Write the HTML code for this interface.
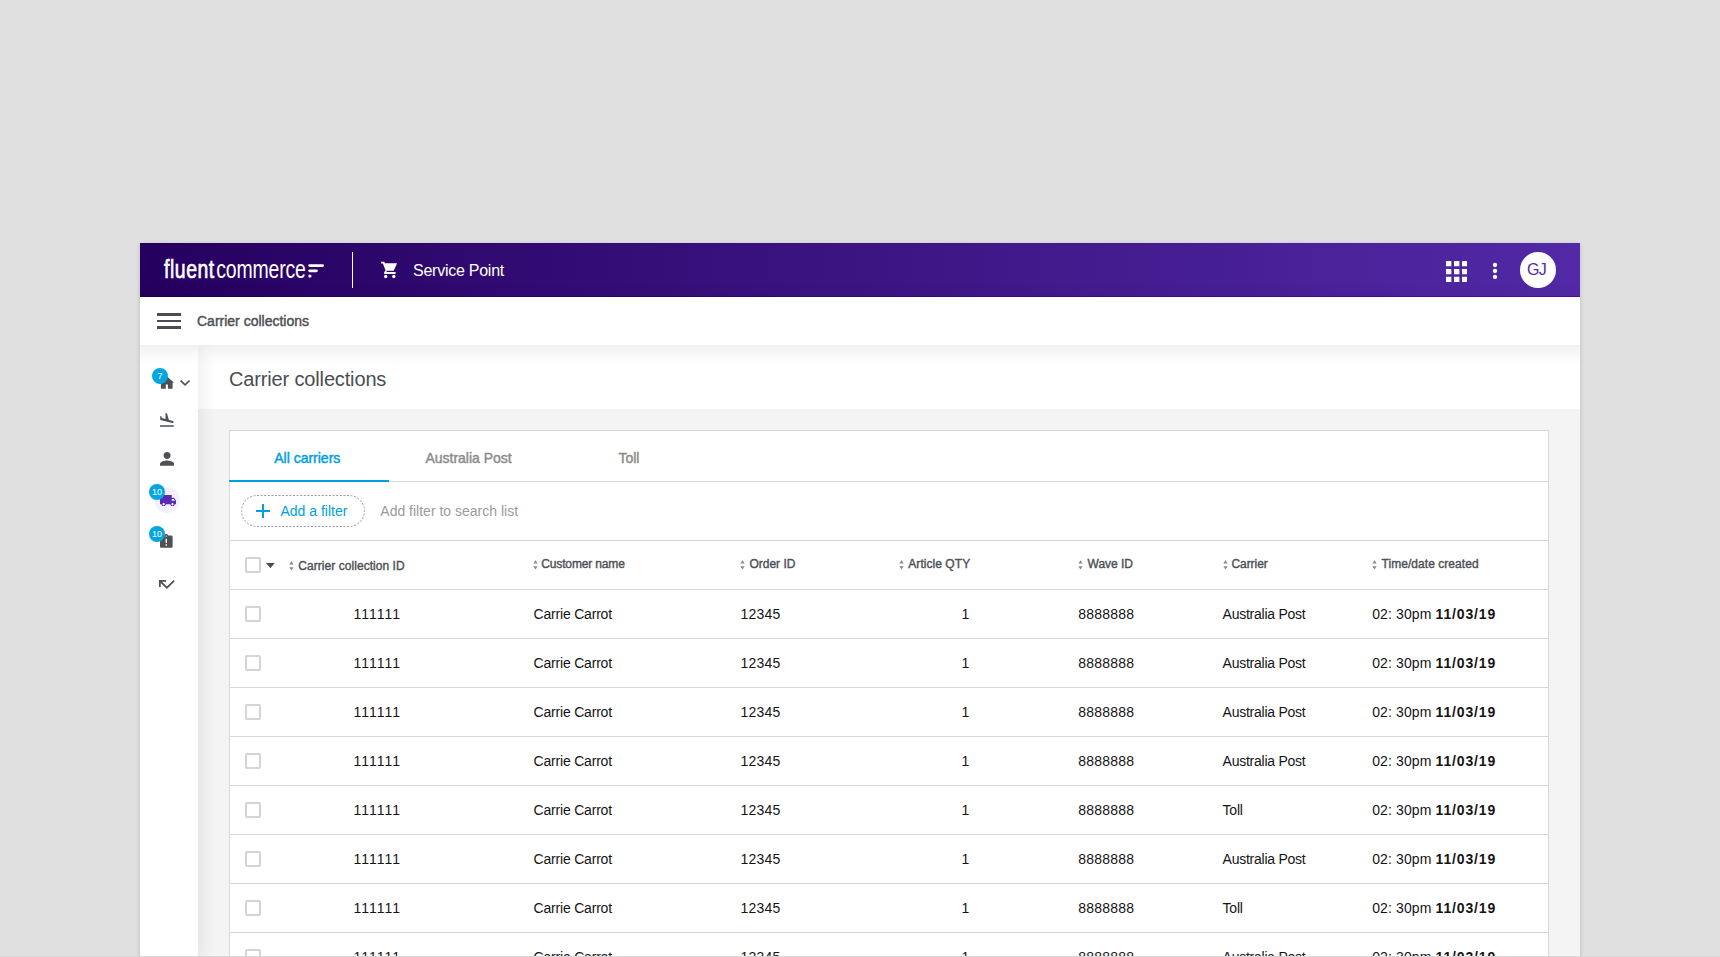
<!DOCTYPE html><html><head><meta charset="utf-8"><style>
*{box-sizing:border-box;margin:0;padding:0}
html,body{width:1720px;height:957px;overflow:hidden;background:#e0e0e0;font-family:"Liberation Sans",sans-serif}
.a{position:absolute}
.t{position:absolute;white-space:nowrap;line-height:16px}
#frame{position:absolute;left:140px;top:243px;width:1440px;height:714px;background:#f4f4f4;box-shadow:0 1px 4px rgba(0,0,0,.18);overflow:hidden}
#hdr{position:absolute;left:0;top:0;width:1440px;height:54px;background:linear-gradient(90deg,#25005f 0%,#5229a6 100%)}
#sub{position:absolute;left:0;top:54px;width:1440px;height:48px;background:#fff;z-index:4}
#subsh{position:absolute;left:-40px;top:54px;width:1520px;height:48px;background:#fff;box-shadow:0 4px 20px rgba(0,0,0,.085);z-index:3}
#side{position:absolute;left:0;top:102px;width:58px;height:620px;background:#fff;box-shadow:3px 0 18px rgba(0,0,0,.08);z-index:2}
#title{position:absolute;left:58px;top:102px;width:1382px;height:64px;background:#fff}
#card{position:absolute;left:89px;top:187px;width:1320px;height:600px;background:#fff;border:1px solid #d6d8db}
.hl{position:absolute;left:0;width:1318px;height:1px;background:#d6d8db}
.cb{position:absolute;width:16px;height:16px;border:2px solid #d4d4d4;border-radius:2px;background:#fff}
.th{position:absolute;white-space:nowrap;font-weight:normal;font-size:12px;line-height:14px;color:#4e5156;-webkit-text-stroke:0.4px #4e5156;letter-spacing:0}
.td{position:absolute;white-space:nowrap;font-size:14px;line-height:16px;color:#151515}
.badge{position:absolute;width:16px;height:16px;border-radius:50%;background:#04a5e0;color:#fff;font-size:9px;line-height:16px;text-align:center;z-index:2}
</style></head><body><div id="frame">
<div id="hdr"><div class="a" style="left:0;top:53px;width:1440px;height:1px;background:linear-gradient(90deg,#1c0050,#4412a0)"></div>
<div class="t" style="left:24px;top:11px;height:30px;line-height:30px;color:#fff;font-size:26.5px;transform:scaleX(.733);transform-origin:0 0;letter-spacing:0px"><b style="font-weight:normal;-webkit-text-stroke:0.7px #fff;letter-spacing:0.75px;margin-right:2px">fluent</b><span style="letter-spacing:-0.2px">commerce</span></div>
<svg class="a" style="left:168.3px;top:20px" width="18" height="15" viewBox="0 0 18 15"><rect x="0.3" y="1.2" width="15.7" height="2.7" rx="1.35" fill="#fff"/><rect x="0.3" y="6.4" width="9.5" height="2.8" rx="1.4" fill="#fff"/><circle cx="1.9" cy="13.05" r="1.6" fill="#fff"/></svg>
<div class="a" style="left:212px;top:9px;width:1px;height:36px;background:#fff"></div>
<svg class="a" style="left:236px;top:14px" width="30" height="30" viewBox="376 257 30 30"><g fill="#fff"><path d="M381.1 261.8H384.3L384.9 263.3H397.1L393.7 270.7H386.5L386.6 271.9H395.6V273.9H384.2V272.3L385.5 270.3L382.9 263.6H381.1V261.8Z"/><circle cx="385.7" cy="276.5" r="1.65"/><circle cx="393.8" cy="276.5" r="1.65"/></g></svg>
<div class="t" style="left:273px;top:19px;color:#fff;font-size:16px;line-height:18px;letter-spacing:-0.25px">Service Point</div>
<svg class="a" style="left:1306px;top:18px" width="21.4" height="21" viewBox="4 4 16 16" preserveAspectRatio="none"><path fill="#fff" d="M4 8h4V4H4v4zm6 12h4v-4h-4v4zm-6 0h4v-4H4v4zm0-6h4v-4H4v4zm6 0h4v-4h-4v4zm6-10v4h4V4h-4zm-6 4h4V4h-4v4zm6 6h4v-4h-4v4zm0 6h4v-4h-4v4z"/></svg>
<svg class="a" style="left:1352px;top:19px" width="6" height="18" viewBox="0 0 6 18"><circle cx="3" cy="3" r="2.15" fill="#fff"/><circle cx="3" cy="9" r="2.15" fill="#fff"/><circle cx="3" cy="14.9" r="2.15" fill="#fff"/></svg>
<div class="a" style="left:1380px;top:9px;width:36px;height:36px;border-radius:50%;background:#fff"></div>
<div class="t" style="left:1378.5px;top:18px;width:36px;text-align:center;color:#5229a6;font-size:16px;line-height:18px;letter-spacing:-0.7px">GJ</div>
</div>
<div id="subsh"></div><div id="sub">
<div class="a" style="left:17px;top:16px;width:24px;height:2.6px;background:#4a4d52"></div>
<div class="a" style="left:17px;top:22.5px;width:24px;height:2.6px;background:#4a4d52"></div>
<div class="a" style="left:17px;top:29px;width:24px;height:2.6px;background:#4a4d52"></div>
<div class="t" style="left:57px;top:16px;font-weight:normal;font-size:14px;color:#4e5156;-webkit-text-stroke:0.45px #4e5156;letter-spacing:0">Carrier collections</div>
</div>
<div id="side">
<svg class="a" style="left:0;top:0" width="58" height="60" viewBox="140 345 58 60"><path fill="#4d5055" d="M159.4 382.8L166.75 376.2L174.1 382.8L172.6 382.8L172.6 388.8L167.9 388.8L167.9 384.4L165.8 384.4L165.8 388.8L160.9 388.8L160.9 382.8Z"/></svg>
<svg class="a" style="left:39.599999999999994px;top:34.60000000000002px" width="10.2" height="6" viewBox="6 8.59 12 7.41" preserveAspectRatio="none"><path fill="#4e5156" d="M7.41 8.59L12 13.17l4.59-4.58L18 10l-6 6-6-6 1.41-1.41z" /></svg>
<svg class="a" style="left:20px;top:68px" width="13.8" height="13.8" viewBox="2.5 2 19 19" preserveAspectRatio="none"><path fill="#4e5156" d="M2.5 19h19v2h-19zm7.18-5.73l4.35 1.16 5.31 1.42c.8.21 1.62-.26 1.84-1.06.21-.8-.26-1.62-1.06-1.84l-5.31-1.42-2.76-9.02L10.12 2v8.28L5.15 8.95l-.93-2.32-1.45-.39v5.17l1.6.43 5.31 1.43z" /></svg>
<svg class="a" style="left:19.900000000000006px;top:107.10000000000002px" width="14.2" height="13.8" viewBox="4 4 16 16" preserveAspectRatio="none"><path fill="#4e5156" d="M12 12c2.21 0 4-1.79 4-4s-1.79-4-4-4-4 1.79-4 4 1.79 4 4 4zm0 2c-2.67 0-8 1.34-8 4v2h16v-2c0-2.66-5.33-4-8-4z" /></svg>
<div class="a" style="left:13.699999999999989px;top:141.7px;width:26px;height:26px;border-radius:50%;background:#f6effd"></div>
<svg class="a" style="left:19.900000000000006px;top:149.7px" width="16.2" height="11.3" viewBox="1 4 22 16" preserveAspectRatio="none"><path fill="#5a2bb0" d="M20 8h-3V4H3c-1.1 0-2 .9-2 2v11h2c0 1.66 1.34 3 3 3s3-1.34 3-3h6c0 1.66 1.34 3 3 3s3-1.34 3-3h2v-5l-3-4zM6 18.5c-.83 0-1.5-.67-1.5-1.5s.67-1.5 1.5-1.5 1.5.67 1.5 1.5-.67 1.5-1.5 1.5zm13.5-9l1.96 2.5H17V9.5h2.5zm-1.5 9c-.83 0-1.5-.67-1.5-1.5s.67-1.5 1.5-1.5 1.5.67 1.5 1.5-.67 1.5-1.5 1.5z" /></svg>
<svg class="a" style="left:20.19999999999999px;top:189px" width="12.6" height="13.8" viewBox="3 1 18 20" preserveAspectRatio="none"><path fill="#4e5156" d="M19 3h-4.18C14.4 1.84 13.3 1 12 1c-1.3 0-2.4.84-2.82 2H5c-1.1 0-2 .9-2 2v14c0 1.1.9 2 2 2h14c1.1 0 2-.9 2-2V5c0-1.1-.9-2-2-2zm-6 15h-2v-2h2v2zm0-4h-2V8h2v6zm-1-9c-.55 0-1-.45-1-1s.45-1 1-1 1 .45 1 1-.45 1-1 1z" /></svg>
<svg class="a" style="left:19px;top:234.79999999999995px" width="15.8" height="9" viewBox="3 7 18 10.41" preserveAspectRatio="none"><path fill="#4e5156" d="M19.59 7L12 14.59 6.41 9H11V7H3v8h2v-4.59l7 7 9-9z" /></svg>
<div class="badge" style="left:12px;top:22.899999999999977px">7</div>
<div class="badge" style="left:9px;top:138.8px">10</div>
<div class="badge" style="left:8.900000000000006px;top:180.79999999999995px">10</div>
</div>
<div id="title"><div class="t" style="left:31px;top:23px;font-size:20px;line-height:22px;color:#4a4d52;letter-spacing:-0.15px">Carrier collections</div></div>
<div id="card">
<div class="hl" style="top:50px"></div>
<div class="a" style="left:-1px;top:49px;width:160px;height:2px;background:#00a0dc"></div>
<div class="t" style="left:44.19999999999999px;top:19px;font-weight:normal;font-size:14px;color:#00a0dc;-webkit-text-stroke:0.45px #00a0dc;letter-spacing:0">All carriers</div>
<div class="t" style="left:195.39999999999998px;top:19px;font-weight:normal;font-size:14px;color:#8c8c8c;-webkit-text-stroke:0.45px #8c8c8c;letter-spacing:0">Australia Post</div>
<div class="t" style="left:388.4px;top:19px;font-weight:normal;font-size:14px;color:#8c8c8c;-webkit-text-stroke:0.45px #8c8c8c;letter-spacing:0">Toll</div>
<svg class="a" style="left:11px;top:64px" width="124" height="32" viewBox="0 0 124 32"><rect x="0.5" y="0.5" width="123" height="31" rx="15.5" fill="none" stroke="#9a9a9a" stroke-width="1" stroke-dasharray="2 1.6"/></svg>
<svg class="a" style="left:26px;top:73.19999999999999px" width="14" height="14" viewBox="0 0 14 14"><path d="M7 0v14M0 7h14" stroke="#00a0dc" stroke-width="2"/></svg>
<div class="t" style="left:50.5px;top:72px;font-size:14px;color:#00a0dc">Add a filter</div>
<div class="t" style="left:150.3px;top:72px;font-size:14px;color:#9b9b9b">Add filter to search list</div>
<div class="hl" style="top:109px"></div>
<div class="cb" style="left:15px;top:126px"></div>
<svg class="a" style="left:36px;top:131.70000000000005px" width="8.8" height="5.2" viewBox="7 10 10 5" preserveAspectRatio="none"><path fill="#4a4d52" d="M7 10l5 5 5-5z"/></svg>
<svg class="a" style="left:58.5px;top:130.0px" width="5" height="10" viewBox="0 0 5 10"><path fill="#8a8a8a" d="M0.3 3.6L2.5 0.2 4.7 3.6zM0.3 6.2L2.5 9.6 4.7 6.2z"/></svg>
<div class="th" style="left:68.30000000000001px;top:127.5px;letter-spacing:0.05px">Carrier collection ID</div>
<svg class="a" style="left:303.1px;top:128.5px" width="5" height="10" viewBox="0 0 5 10"><path fill="#8a8a8a" d="M0.3 3.6L2.5 0.2 4.7 3.6zM0.3 6.2L2.5 9.6 4.7 6.2z"/></svg>
<div class="th" style="left:311.29999999999995px;top:126px;letter-spacing:-0.15px">Customer name</div>
<svg class="a" style="left:510.1px;top:128.5px" width="5" height="10" viewBox="0 0 5 10"><path fill="#8a8a8a" d="M0.3 3.6L2.5 0.2 4.7 3.6zM0.3 6.2L2.5 9.6 4.7 6.2z"/></svg>
<div class="th" style="left:519.4px;top:126px;letter-spacing:0px">Order ID</div>
<svg class="a" style="left:669.2px;top:128.5px" width="5" height="10" viewBox="0 0 5 10"><path fill="#8a8a8a" d="M0.3 3.6L2.5 0.2 4.7 3.6zM0.3 6.2L2.5 9.6 4.7 6.2z"/></svg>
<div class="th" style="left:678.3px;top:126px;letter-spacing:0.05px">Article QTY</div>
<svg class="a" style="left:848px;top:128.5px" width="5" height="10" viewBox="0 0 5 10"><path fill="#8a8a8a" d="M0.3 3.6L2.5 0.2 4.7 3.6zM0.3 6.2L2.5 9.6 4.7 6.2z"/></svg>
<div class="th" style="left:857.5999999999999px;top:126px;letter-spacing:-0.05px">Wave ID</div>
<svg class="a" style="left:992.5999999999999px;top:128.5px" width="5" height="10" viewBox="0 0 5 10"><path fill="#8a8a8a" d="M0.3 3.6L2.5 0.2 4.7 3.6zM0.3 6.2L2.5 9.6 4.7 6.2z"/></svg>
<div class="th" style="left:1001.4000000000001px;top:126px;letter-spacing:-0.05px">Carrier</div>
<svg class="a" style="left:1142.2px;top:128.5px" width="5" height="10" viewBox="0 0 5 10"><path fill="#8a8a8a" d="M0.3 3.6L2.5 0.2 4.7 3.6zM0.3 6.2L2.5 9.6 4.7 6.2z"/></svg>
<div class="th" style="left:1151.5px;top:126px;letter-spacing:0.05px">Time/date created</div>
<div class="hl" style="top:158px"></div>
<div class="cb" style="left:15px;top:175px"></div>
<div class="td" style="left:123.5px;top:175px;letter-spacing:1px">111111</div>
<div class="td" style="left:303.6px;top:175px;letter-spacing:-0.2px">Carrie Carrot</div>
<div class="td" style="left:510.6px;top:175px;letter-spacing:0.2px">12345</div>
<div class="td" style="left:731.5px;top:175px">1</div>
<div class="td" style="left:848.3px;top:175px;letter-spacing:0.2px">8888888</div>
<div class="td" style="left:992.5999999999999px;top:175px;letter-spacing:-0.25px">Australia Post</div>
<div class="td" style="left:1142.2px;top:175px;letter-spacing:0.12px">02: 30pm <b style="letter-spacing:0.85px">11/03/19</b></div>
<div class="hl" style="top:207px"></div>
<div class="cb" style="left:15px;top:224px"></div>
<div class="td" style="left:123.5px;top:224px;letter-spacing:1px">111111</div>
<div class="td" style="left:303.6px;top:224px;letter-spacing:-0.2px">Carrie Carrot</div>
<div class="td" style="left:510.6px;top:224px;letter-spacing:0.2px">12345</div>
<div class="td" style="left:731.5px;top:224px">1</div>
<div class="td" style="left:848.3px;top:224px;letter-spacing:0.2px">8888888</div>
<div class="td" style="left:992.5999999999999px;top:224px;letter-spacing:-0.25px">Australia Post</div>
<div class="td" style="left:1142.2px;top:224px;letter-spacing:0.12px">02: 30pm <b style="letter-spacing:0.85px">11/03/19</b></div>
<div class="hl" style="top:256px"></div>
<div class="cb" style="left:15px;top:273px"></div>
<div class="td" style="left:123.5px;top:273px;letter-spacing:1px">111111</div>
<div class="td" style="left:303.6px;top:273px;letter-spacing:-0.2px">Carrie Carrot</div>
<div class="td" style="left:510.6px;top:273px;letter-spacing:0.2px">12345</div>
<div class="td" style="left:731.5px;top:273px">1</div>
<div class="td" style="left:848.3px;top:273px;letter-spacing:0.2px">8888888</div>
<div class="td" style="left:992.5999999999999px;top:273px;letter-spacing:-0.25px">Australia Post</div>
<div class="td" style="left:1142.2px;top:273px;letter-spacing:0.12px">02: 30pm <b style="letter-spacing:0.85px">11/03/19</b></div>
<div class="hl" style="top:305px"></div>
<div class="cb" style="left:15px;top:322px"></div>
<div class="td" style="left:123.5px;top:322px;letter-spacing:1px">111111</div>
<div class="td" style="left:303.6px;top:322px;letter-spacing:-0.2px">Carrie Carrot</div>
<div class="td" style="left:510.6px;top:322px;letter-spacing:0.2px">12345</div>
<div class="td" style="left:731.5px;top:322px">1</div>
<div class="td" style="left:848.3px;top:322px;letter-spacing:0.2px">8888888</div>
<div class="td" style="left:992.5999999999999px;top:322px;letter-spacing:-0.25px">Australia Post</div>
<div class="td" style="left:1142.2px;top:322px;letter-spacing:0.12px">02: 30pm <b style="letter-spacing:0.85px">11/03/19</b></div>
<div class="hl" style="top:354px"></div>
<div class="cb" style="left:15px;top:371px"></div>
<div class="td" style="left:123.5px;top:371px;letter-spacing:1px">111111</div>
<div class="td" style="left:303.6px;top:371px;letter-spacing:-0.2px">Carrie Carrot</div>
<div class="td" style="left:510.6px;top:371px;letter-spacing:0.2px">12345</div>
<div class="td" style="left:731.5px;top:371px">1</div>
<div class="td" style="left:848.3px;top:371px;letter-spacing:0.2px">8888888</div>
<div class="td" style="left:992.5999999999999px;top:371px;letter-spacing:-0.25px">Toll</div>
<div class="td" style="left:1142.2px;top:371px;letter-spacing:0.12px">02: 30pm <b style="letter-spacing:0.85px">11/03/19</b></div>
<div class="hl" style="top:403px"></div>
<div class="cb" style="left:15px;top:420px"></div>
<div class="td" style="left:123.5px;top:420px;letter-spacing:1px">111111</div>
<div class="td" style="left:303.6px;top:420px;letter-spacing:-0.2px">Carrie Carrot</div>
<div class="td" style="left:510.6px;top:420px;letter-spacing:0.2px">12345</div>
<div class="td" style="left:731.5px;top:420px">1</div>
<div class="td" style="left:848.3px;top:420px;letter-spacing:0.2px">8888888</div>
<div class="td" style="left:992.5999999999999px;top:420px;letter-spacing:-0.25px">Australia Post</div>
<div class="td" style="left:1142.2px;top:420px;letter-spacing:0.12px">02: 30pm <b style="letter-spacing:0.85px">11/03/19</b></div>
<div class="hl" style="top:452px"></div>
<div class="cb" style="left:15px;top:469px"></div>
<div class="td" style="left:123.5px;top:469px;letter-spacing:1px">111111</div>
<div class="td" style="left:303.6px;top:469px;letter-spacing:-0.2px">Carrie Carrot</div>
<div class="td" style="left:510.6px;top:469px;letter-spacing:0.2px">12345</div>
<div class="td" style="left:731.5px;top:469px">1</div>
<div class="td" style="left:848.3px;top:469px;letter-spacing:0.2px">8888888</div>
<div class="td" style="left:992.5999999999999px;top:469px;letter-spacing:-0.25px">Toll</div>
<div class="td" style="left:1142.2px;top:469px;letter-spacing:0.12px">02: 30pm <b style="letter-spacing:0.85px">11/03/19</b></div>
<div class="hl" style="top:501px"></div>
<div class="cb" style="left:15px;top:518px"></div>
<div class="td" style="left:123.5px;top:518px;letter-spacing:1px">111111</div>
<div class="td" style="left:303.6px;top:518px;letter-spacing:-0.2px">Carrie Carrot</div>
<div class="td" style="left:510.6px;top:518px;letter-spacing:0.2px">12345</div>
<div class="td" style="left:731.5px;top:518px">1</div>
<div class="td" style="left:848.3px;top:518px;letter-spacing:0.2px">8888888</div>
<div class="td" style="left:992.5999999999999px;top:518px;letter-spacing:-0.25px">Australia Post</div>
<div class="td" style="left:1142.2px;top:518px;letter-spacing:0.12px">02: 30pm <b style="letter-spacing:0.85px">11/03/19</b></div>
<div class="hl" style="top:550px"></div>
</div>
</div>
<div class="a" style="left:0;top:956px;width:1720px;height:1px;background:#d8d8d8;z-index:20"></div>
</body></html>
